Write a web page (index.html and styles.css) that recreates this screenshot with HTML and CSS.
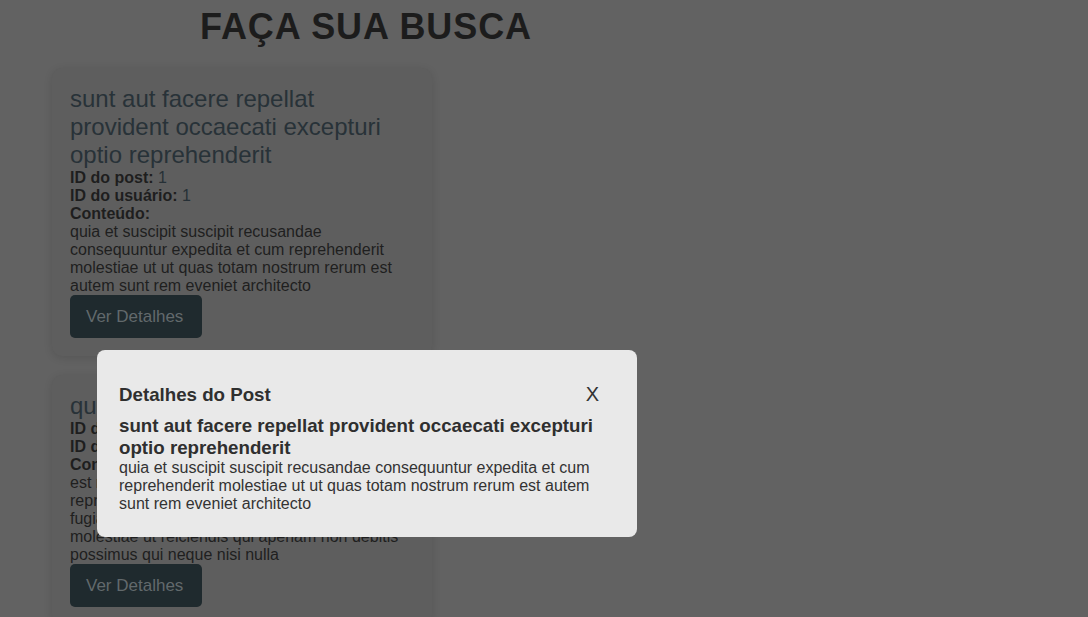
FILE: index.html
```html
<!DOCTYPE html>
<html lang="pt-BR">
<head>
<meta charset="utf-8">
<title>Posts</title>
<link rel="stylesheet" href="styles.css">
</head>
<body>
<div class="page">
  <h1 class="page-title">FAÇA SUA BUSCA</h1>
  <div class="post-list">
    <div class="post-card">
      <h2 class="post-title">sunt aut facere repellat provident occaecati excepturi optio reprehenderit</h2>
      <div class="post-meta"><b>ID do post:</b> <span class="val">1</span></div>
      <div class="post-meta"><b>ID do usuário:</b> <span class="val">1</span></div>
      <div class="post-meta"><b>Conteúdo:</b></div>
      <p class="post-body">quia et suscipit suscipit recusandae consequuntur expedita et cum reprehenderit molestiae ut ut quas totam nostrum rerum est autem sunt rem eveniet architecto</p>
      <button class="btn">Ver Detalhes</button>
    </div>
    <div class="post-card">
      <h2 class="post-title">qui est esse</h2>
      <div class="post-meta"><b>ID do post:</b> <span class="val">2</span></div>
      <div class="post-meta"><b>ID do usuário:</b> <span class="val">1</span></div>
      <div class="post-meta"><b>Conteúdo:</b></div>
      <p class="post-body">est rerum tempore vitae sequi sint nihil reprehenderit dolor beatae ea dolores neque fugiat blanditiis voluptate porro vel nihil molestiae ut reiciendis qui aperiam non debitis possimus qui neque nisi nulla</p>
      <button class="btn">Ver Detalhes</button>
    </div>
  </div>
</div>

<div class="backdrop">
  <div class="modal">
    <div class="modal-head">
      <h2 class="modal-title">Detalhes do Post</h2>
      <button class="close">X</button>
    </div>
    <h3 class="modal-post-title">sunt aut facere repellat provident occaecati excepturi optio reprehenderit</h3>
    <p class="modal-body">quia et suscipit suscipit recusandae consequuntur expedita et cum reprehenderit molestiae ut ut quas totam nostrum rerum est autem sunt rem eveniet architecto</p>
  </div>
</div>
</body>
</html>
```

FILE: styles.css
```css
html, body {
  margin: 0;
  padding: 0;
  background: #626262;
  font-family: "Liberation Sans", Arial, sans-serif;
  overflow: hidden;
  height: 617px;
}

.page {
  width: 732px;
}

.page-title {
  margin: 6px 0 20px;
  text-align: center;
  font-size: 36px;
  font-weight: bold;
  letter-spacing: 0.9px;
  color: #1c1c1c;
}

.post-list {
  display: flex;
  flex-direction: column;
  gap: 19px;
  padding-left: 52px;
  width: 380px;
}

.post-card {
  background: #5e5e5e;
  border-radius: 10px;
  padding: 17px 18px 18px;
  box-shadow: 0 2px 8px rgba(0, 0, 0, 0.12);
}

.post-title {
  margin: 0;
  font-size: 24px;
  font-weight: normal;
  color: #283238;
}

.post-meta {
  font-size: 16px;
  color: #1e1e1e;
}

.post-meta .val {
  color: #263036;
}

.post-body {
  margin: 0;
  font-size: 16px;
  color: #1f1f1f;
}

.btn {
  display: block;
  margin-top: 0;
  background: #1f2a2e;
  color: #62696c;
  border: none;
  border-radius: 5px;
  height: 43px;
  width: 132px;
  padding: 0 0 0 16px;
  text-align: left;
  font-family: "Liberation Sans", Arial, sans-serif;
  font-size: 17px;
}

.backdrop {
  position: fixed;
  inset: 0;
}

.modal {
  position: absolute;
  left: 97px;
  top: 350px;
  width: 540px;
  box-sizing: border-box;
  background: #e9e9e9;
  border-radius: 8px;
  padding: 33px 22px 24px;
  color: #333;
}

.modal-head {
  display: flex;
  justify-content: space-between;
  align-items: center;
}

.modal-title {
  margin: 0;
  font-size: 18.72px;
  font-weight: bold;
  color: #2f2f2f;
}

.close {
  background: none;
  border: none;
  padding: 0 16px 0 0;
  font-family: "Liberation Sans", Arial, sans-serif;
  font-size: 20px;
  color: #333;
}

.modal-post-title {
  margin: 9px 0 0;
  font-size: 18.72px;
  line-height: 22px;
  font-weight: bold;
  color: #2f2f2f;
}

.modal-body {
  margin: 0;
  font-size: 16px;
  line-height: 18px;
  color: #333;
}
```
